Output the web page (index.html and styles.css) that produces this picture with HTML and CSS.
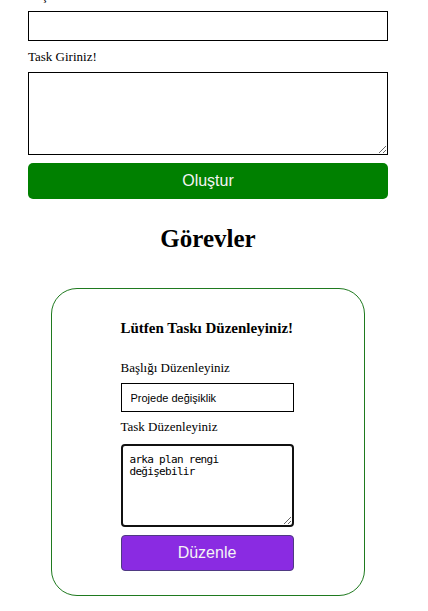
FILE: index.html
```
<!DOCTYPE html>
<html lang="tr">
<head>
<meta charset="utf-8">
<title>Görevler</title>
<link rel="stylesheet" href="styles.css">
</head>
<body>
<div class="page">
  <form class="create-form">
    <label class="lbl">Başlık Giriniz!</label>
    <input class="create-input" type="text">
    <label class="lbl">Task Giriniz!</label>
    <textarea class="create-textarea"></textarea>
    <button type="button" class="btn btn-green">Oluştur</button>
  </form>

  <h2 class="section-title">Görevler</h2>

  <div class="card">
    <form class="edit-form">
      <h3 class="edit-title">Lütfen Taskı Düzenleyiniz!</h3>
      <label class="lbl">Başlığı Düzenleyiniz</label>
      <input class="edit-input" type="text" value="Projede değişiklik">
      <label class="lbl lbl-task">Task Düzenleyiniz</label>
      <textarea class="edit-textarea">arka plan rengi
değişebilir</textarea>
      <button type="button" class="btn btn-purple">Düzenle</button>
    </form>
  </div>
</div>
</body>
</html>
```

FILE: styles.css
```
html, body {
  margin: 0;
  padding: 0;
  background: #fff;
  overflow: hidden;
}

body {
  font-family: "Liberation Serif", "Times New Roman", serif;
  color: #000;
}

.page {
  width: 360px;
  margin: -12px 0 0 28px;
}

.create-form {
  display: flex;
  flex-direction: column;
  gap: 8px;
}

.lbl {
  display: block;
  font-size: 13px;
  line-height: 15px;
}

.create-input {
  box-sizing: border-box;
  width: 100%;
  height: 30px;
  margin: 0;
  border: 1px solid #000;
  border-radius: 0;
  padding: 0 8px;
  font: 13px "Liberation Sans", Arial, sans-serif;
}

.create-textarea {
  box-sizing: border-box;
  width: 100%;
  height: 83px;
  margin: 0;
  border: 1px solid #000;
  border-radius: 0;
  padding: 2px;
  font: 13px "DejaVu Sans Mono", monospace;
}

.btn {
  box-sizing: border-box;
  width: 100%;
  height: 36px;
  margin: 0;
  border-radius: 5px;
  font: 16px "Liberation Sans", Arial, sans-serif;
  color: #f4f4f4;
  cursor: pointer;
}

.btn-green {
  background: #008000;
  border: none;
}

.section-title {
  margin: 26px 0 35px;
  text-align: center;
  font-size: 25px;
  font-weight: bold;
  line-height: normal;
}

.card {
  margin: 0 23px;
  border: 1px solid #1f7a1f;
  border-radius: 26px;
  padding: 31px 0 24px;
}

.edit-form {
  width: 173px;
  margin: 0 auto;
  display: flex;
  flex-direction: column;
  position: relative;
  left: -1px;
}

.edit-title {
  margin: 0 0 23px;
  font-size: 15px;
  line-height: 17px;
  font-weight: bold;
  white-space: nowrap;
}

.edit-input {
  box-sizing: border-box;
  width: 100%;
  height: 29px;
  margin: 8px 0 0;
  border: 1px solid #000;
  border-radius: 0;
  padding: 0 9px;
  font: 11px "Liberation Sans", Arial, sans-serif;
  color: #000;
}

.lbl-task {
  margin-top: 7px;
}

.edit-textarea {
  box-sizing: border-box;
  width: 100%;
  height: 83px;
  margin: 10px 0 0;
  border: 2px solid #111;
  border-radius: 4px;
  padding: 8px 7px;
  font: 11px "DejaVu Sans Mono", monospace;
  letter-spacing: -0.7px;
  line-height: 12px;
  color: #000;
  outline: none;
}

.btn-purple {
  margin-top: 8px;
  background: #8a2be2;
  border: 1px solid #4f3a82;
  border-radius: 4px;
}
```
